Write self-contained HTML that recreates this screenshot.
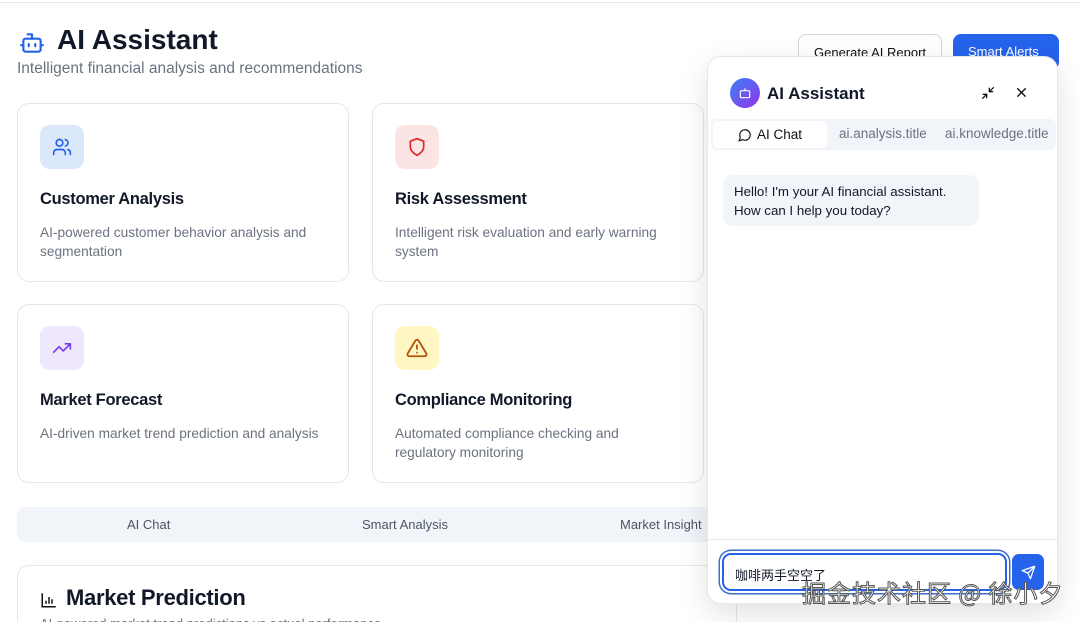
<!DOCTYPE html>
<html><head><meta charset="utf-8"><style>
*{box-sizing:border-box;margin:0;padding:0}
html,body{width:1080px;height:622px;overflow:hidden}
body{background:#fff;font-family:"Liberation Sans","Noto Sans CJK SC",sans-serif;position:relative;color:#111827}
.topline{position:absolute;left:0;right:0;top:2px;height:1px;background:#e5e7eb}
h1{position:absolute;left:57px;top:24px;font-size:28px;font-weight:700}
.sub{position:absolute;left:17px;top:60px;font-size:15.5px;color:#6b7280}
.card{position:absolute;width:332px;height:179px;border:1px solid #e5e7eb;border-radius:12px;background:#fff}
.ic{position:absolute;left:22px;top:21px;width:44px;height:44px;border-radius:10px;display:flex;align-items:center;justify-content:center}
.card h3{position:absolute;left:22px;top:86px;font-size:16.5px;font-weight:700;letter-spacing:-0.3px}
.card p{position:absolute;left:22px;top:119px;width:280px;font-size:13.7px;line-height:19px;color:#6b7280}
.btn{position:absolute;top:34px;height:36px;border-radius:8px;font-size:13px;padding:10px 15px}
.tabs{position:absolute;left:17px;top:507px;width:700px;height:35px;background:#f1f5f9;border-radius:8px;font-size:13px;color:#4b5563}
.tabs span{position:absolute;top:10px}
.mp{position:absolute;left:17px;top:565px;width:720px;height:80px;border:1px solid #e5e7eb;border-radius:12px}
.panel{position:absolute;left:707px;top:56px;width:351px;height:548px;background:#fff;border:1px solid #e5e7eb;border-radius:14px;box-shadow:0 10px 30px rgba(0,0,0,.12)}
</style></head><body>
<div class="topline"></div>
<svg style="position:absolute;left:18px;top:30px" width="28" height="26" viewBox="0 0 24 24" fill="none" stroke="#2563eb" stroke-width="2" stroke-linecap="round" stroke-linejoin="round"><path d="M12 8V4H8"/><rect x="4" y="8" width="16" height="12" rx="2"/><path d="M2 14h2M20 14h2M15 13v2M9 13v2"/></svg>
<h1>AI Assistant</h1>
<div class="sub">Intelligent financial analysis and recommendations</div>
<div class="btn" style="left:798px;border:1px solid #d1d5db;background:#fff;color:#111">Generate AI Report</div>
<div class="btn" style="left:953px;background:#2563eb;color:#fff;width:106px">Smart Alerts</div>

<div class="card" style="left:17px;top:103px"><div class="ic" style="background:#dbe7fb"><svg width="20" height="20" viewBox="0 0 24 24" fill="none" stroke="#2563eb" stroke-width="2" stroke-linecap="round"><circle cx="9" cy="7" r="4"/><path d="M2 21v-2a4 4 0 0 1 4-4h6a4 4 0 0 1 4 4v2M16 3.1a4 4 0 0 1 0 7.8M22 21v-2a4 4 0 0 0-3-3.9"/></svg></div><h3>Customer Analysis</h3><p>AI-powered customer behavior analysis and segmentation</p></div>
<div class="card" style="left:372px;top:103px"><div class="ic" style="background:#fde4e4"><svg width="20" height="20" viewBox="0 0 24 24" fill="none" stroke="#dc2626" stroke-width="2" stroke-linejoin="round"><path d="M12 22s8-4 8-10V5l-8-3-8 3v7c0 6 8 10 8 10z"/></svg></div><h3>Risk Assessment</h3><p>Intelligent risk evaluation and early warning system</p></div>
<div class="card" style="left:17px;top:304px"><div class="ic" style="background:#efe7fb"><svg width="20" height="20" viewBox="0 0 24 24" fill="none" stroke="#7c3aed" stroke-width="2" stroke-linecap="round" stroke-linejoin="round"><path d="M22 7l-8.5 8.5-5-5L2 17M16 7h6v6"/></svg></div><h3>Market Forecast</h3><p style="width:300px">AI-driven market trend prediction and analysis</p></div>
<div class="card" style="left:372px;top:304px"><div class="ic" style="background:#fef6c3"><svg width="22" height="22" viewBox="0 0 24 24" fill="none" stroke="#b45309" stroke-width="2" stroke-linecap="round" stroke-linejoin="round"><path d="M10.3 3.9L1.8 18a2 2 0 0 0 1.7 3h17a2 2 0 0 0 1.7-3L13.7 3.9a2 2 0 0 0-3.4 0zM12 9v4M12 17h.01"/></svg></div><h3>Compliance Monitoring</h3><p style="width:240px">Automated compliance checking and regulatory monitoring</p></div>

<div class="tabs"><span style="left:110px">AI Chat</span><span style="left:345px">Smart Analysis</span><span style="left:603px">Market Insight</span></div>
<div class="mp"><svg style="position:absolute;left:22px;top:25px" width="18" height="18" viewBox="0 0 24 24" fill="none" stroke="#111" stroke-width="2"><path d="M3 3v18h18M8 17v-4M12 17V8M16 17v-6"/></svg><div style="position:absolute;left:48px;top:19px;font-size:22px;font-weight:700;letter-spacing:-0.3px">Market Prediction</div><div style="position:absolute;left:22px;top:50px;font-size:13px;color:#6b7280">AI-powered market trend predictions vs actual performance</div></div>

<div class="panel">
 <div style="position:absolute;left:22px;top:21px;width:30px;height:30px;border-radius:50%;background:linear-gradient(135deg,#3b82f6,#9333ea);display:flex;align-items:center;justify-content:center"><svg width="14" height="14" viewBox="0 0 24 24" fill="none" stroke="#fff" stroke-width="2"><path d="M12 8V4"/><rect x="4" y="8" width="16" height="12" rx="2"/></svg></div>
 <div style="position:absolute;left:59px;top:27px;font-size:17px;font-weight:700">AI Assistant</div>
 <svg style="position:absolute;left:272px;top:28px" width="16" height="16" viewBox="0 0 24 24" fill="none" stroke="#111" stroke-width="2" stroke-linecap="round"><path d="M4 20l6-6M10 14H5M10 14v5M20 4l-6 6M14 10h5M14 10V5"/></svg>
 <svg style="position:absolute;left:306px;top:28px" width="15" height="15" viewBox="0 0 24 24" fill="none" stroke="#111" stroke-width="2.2" stroke-linecap="round"><path d="M6 6l12 12M18 6L6 18"/></svg>
 <div style="position:absolute;left:3px;top:62px;width:345px;height:31px;background:#f1f5f9;border-radius:6px;font-size:13.5px;color:#6b7280">
  <div style="position:absolute;left:2px;top:2px;width:114px;height:27px;background:#fff;border-radius:5px;color:#111"><svg style="position:absolute;left:25px;top:7px" width="14" height="14" viewBox="0 0 24 24" fill="none" stroke="#111" stroke-width="2"><path d="M7.9 20A9 9 0 1 0 4 16.1L2 22z"/></svg><span style="position:absolute;left:44px;top:6px">AI Chat</span></div>
  <span style="position:absolute;left:128px;top:7px">ai.analysis.title</span><span style="position:absolute;left:234px;top:7px">ai.knowledge.title</span>
 </div>
 <div style="position:absolute;left:15px;top:118px;width:256px;height:51px;background:#f1f5f9;border-radius:10px;padding:7px 11px;font-size:13.3px;line-height:19px">Hello! I'm your AI financial assistant. How can I help you today?</div>
 <div style="position:absolute;left:0;right:0;top:482px;height:1px;background:#e5e7eb"></div>
 <div style="position:absolute;left:14px;top:496px;width:285px;height:38px;border:2px solid #2563eb;border-radius:9px;box-shadow:0 0 0 2px #fff,0 0 0 3.5px #3b6fc9;padding:10px 11px;font-size:13px">咖啡两手空空了</div>
 <div style="position:absolute;left:304px;top:497px;width:32px;height:36px;background:#2563eb;border-radius:7px;display:flex;align-items:center;justify-content:center"><svg width="15" height="15" viewBox="0 0 24 24" fill="none" stroke="#fff" stroke-width="2" stroke-linejoin="round"><path d="M22 2L11 13M22 2l-7 20-4-9-9-4z"/></svg></div>
</div>
<div style="position:absolute;left:802px;top:574px;font-size:24px;color:#fff;-webkit-text-stroke:1px #555;font-family:'Noto Sans CJK SC',sans-serif;letter-spacing:1px">掘金技术社区 @ 徐小夕</div>
</body></html>
